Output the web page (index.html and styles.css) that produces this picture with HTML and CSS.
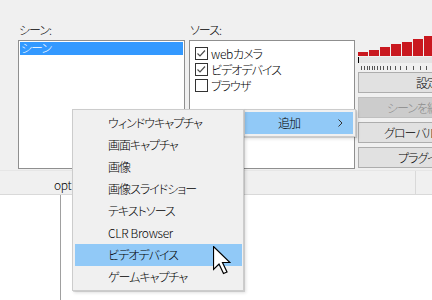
FILE: index.html
```html
<!DOCTYPE html>
<html lang="ja">
<head>
    <meta charset="UTF-8">
    <title>Open Broadcaster Software</title>
    <link rel="stylesheet" href="styles.css">
</head>
<body>
    <div class="window">
        <div class="top">
            <div class="pane pane-scenes">
                <div class="label">シーン:</div>
                <div class="listbox">
                    <div class="scene-item selected">シーン</div>
                </div>
            </div>

            <div class="pane pane-sources">
                <div class="label">ソース:</div>
                <div class="listbox sources">
                    <div class="check-item">
                        <span class="checkbox"><svg width="11" height="11" viewBox="0 0 11 11"><path d="M1.5 5.5 L4 8 L9 2.5" fill="none" stroke="#4d4d4d" stroke-width="1.2"/></svg></span>
                        <span><span class="latin">web</span>カメラ</span>
                    </div>
                    <div class="check-item">
                        <span class="checkbox"><svg width="11" height="11" viewBox="0 0 11 11"><path d="M1.5 5.5 L4 8 L9 2.5" fill="none" stroke="#4d4d4d" stroke-width="1.2"/></svg></span>
                        ビデオデバイス
                    </div>
                    <div class="check-item">
                        <span class="checkbox"></span>
                        ブラウザ
                    </div>
                </div>
            </div>

            <div class="controls">
                <div class="meter">
                    <span class="bar" style="height: 4px"></span>
                    <span class="bar" style="height: 6px"></span>
                    <span class="bar" style="height: 9px"></span>
                    <span class="bar" style="height: 12px"></span>
                    <span class="bar" style="height: 14px"></span>
                    <span class="bar" style="height: 17px"></span>
                    <span class="bar" style="height: 20px"></span>
                </div>
                <div class="slider"><span class="thumb"></span></div>
                <svg class="ticks" width="74" height="4" viewBox="0 0 74 4">
                    <g stroke="#555" stroke-width="1">
                        <line x1="3.5" y1="0" x2="3.5" y2="4"/>
                        <line x1="6.5" y1="0" x2="6.5" y2="4"/>
                        <line x1="9.5" y1="0" x2="9.5" y2="4"/>
                        <line x1="11.5" y1="0" x2="11.5" y2="4"/>
                        <line x1="14.5" y1="0" x2="14.5" y2="4"/>
                        <line x1="16.5" y1="0" x2="16.5" y2="4"/>
                        <line x1="19.5" y1="0" x2="19.5" y2="4"/>
                        <line x1="22.5" y1="0" x2="22.5" y2="4"/>
                        <line x1="25.5" y1="0" x2="25.5" y2="4"/>
                        <line x1="29.5" y1="0" x2="29.5" y2="4"/>
                        <line x1="32.5" y1="0" x2="32.5" y2="4"/>
                        <line x1="37.5" y1="0" x2="37.5" y2="4"/>
                        <line x1="42.5" y1="0" x2="42.5" y2="4"/>
                        <line x1="48.5" y1="0" x2="48.5" y2="4"/>
                        <line x1="55.5" y1="0" x2="55.5" y2="4"/>
                        <line x1="62.5" y1="0" x2="62.5" y2="4"/>
                        <line x1="68.5" y1="0" x2="68.5" y2="4"/>
                    </g>
                </svg>
                <div class="buttons">
                    <div class="button button-settings">設定...</div>
                    <div class="button button-edit disabled">シーンを編集</div>
                    <div class="button button-global">グローバルソース...</div>
                    <div class="button button-plugins">プラグイン...</div>
                </div>
            </div>
        </div>

        <div class="header-bar">
            <div class="header-cell latin">opt</div>
        </div>

        <div class="preview">
            <div class="preview-left"></div>
        </div>

        <!-- context menu: parent "追加" with its submenu opened to the left -->
        <div class="menu menu-parent">
            <div class="menu-item active">
                <span>追加</span>
                <svg width="5" height="8" viewBox="0 0 5 8"><path d="M0.5 0.5 L4 4 L0.5 7.5" fill="none" stroke="#333" stroke-width="1"/></svg>
            </div>
        </div>

        <div class="menu menu-sub">
            <div class="menu-item">ウィンドウキャプチャ</div>
            <div class="menu-item">画面キャプチャ</div>
            <div class="menu-item">画像</div>
            <div class="menu-item">画像スライドショー</div>
            <div class="menu-item">テキストソース</div>
            <div class="menu-item latin">CLR Browser</div>
            <div class="menu-item active">ビデオデバイス</div>
            <div class="menu-item">ゲームキャプチャ</div>
        </div>

        <svg class="cursor" width="18" height="29" viewBox="0 0 18 29">
            <path d="M0.5 0.5 L0.5 23.5 L6 18 L10.5 27.5 L14 26 L9.5 16.5 L17 16.5 Z" fill="#fff" stroke="#000" stroke-width="1.2" stroke-linejoin="miter"/>
        </svg>
    </div>
</body>
</html>
```

FILE: styles.css
```css
body {
    margin: 0;
    background-color: #f0f0f0;
    font-family: "Noto Sans CJK JP", sans-serif;
    font-size: 12px;
    font-weight: 300;
    font-feature-settings: "palt";
    letter-spacing: -1px;
    color: #000;
}

.latin {
    letter-spacing: -0.3px;
}

.window {
    position: relative;
    width: 432px;
    height: 300px;
    overflow: hidden;
}

.top {
    display: flex;
    height: 170px;
    padding: 22px 0 0 18px;
    box-sizing: border-box;
}

.pane-scenes {
    width: 167px;
    margin-right: 4px;
}

.pane-sources {
    width: 166px;
    margin-right: 3px;
}

.label {
    height: 18px;
    line-height: 16px;
    padding-left: 1px;
}

.listbox {
    height: 129px;
    box-sizing: border-box;
    border: 1px solid #8f8f8f;
    background-color: white;
}

.scene-item {
    margin: 1px;
    height: 13px;
    line-height: 12px;
    padding-left: 1px;
}

.scene-item.selected {
    background-color: #3399ff;
    color: white;
}

.sources {
    padding: 4px 0 0 5px;
}

.check-item {
    display: flex;
    align-items: center;
    height: 16px;
    gap: 3px;
}

.checkbox {
    display: flex;
    align-items: center;
    justify-content: center;
    width: 13px;
    height: 13px;
    box-sizing: border-box;
    border: 1px solid #333;
    background-color: white;
}

.controls {
    width: 74px;
    flex-shrink: 0;
}

.meter {
    display: flex;
    align-items: flex-end;
    gap: 1px;
    height: 20px;
    margin-top: 14px;
}

.bar {
    width: 10px;
    flex-shrink: 0;
    background-color: #c9181f;
}

.slider {
    height: 6px;
    margin-top: 1px;
    background-color: #e4e4e4;
}

.thumb {
    display: block;
    width: 1px;
    height: 6px;
    background-color: #000;
}

.ticks {
    display: block;
    margin-top: 3px;
}

.buttons {
    margin-top: 2px;
}

.button {
    width: 110px;
    height: 21px;
    box-sizing: border-box;
    margin-bottom: 4px;
    border: 1px solid #adadad;
    background-color: #e1e1e1;
    line-height: 19px;
    white-space: nowrap;
}

.button.disabled {
    border-color: #bfbfbf;
    background-color: #cccccc;
    color: #8a8a8a;
}

.button-settings { padding-left: 57px; }
.button-edit { padding-left: 28px; }
.button-global { padding-left: 25px; }
.button-plugins { padding-left: 39px; }

.header-bar {
    display: flex;
    height: 25px;
    box-sizing: border-box;
    border-top: 1px solid #e6e6e6;
    border-bottom: 1px solid #d9d9d9;
}

.header-cell {
    width: 416px;
    box-sizing: border-box;
    border-right: 1px solid #d9d9d9;
    padding: 6px 0 0 54px;
    line-height: 16px;
}

.preview {
    height: 105px;
    background-color: white;
}

.preview-left {
    width: 60px;
    height: 100%;
    border-right: 1px solid #a0a0a0;
}

.menu {
    position: absolute;
    top: 109px;
    box-sizing: border-box;
    border: 1px solid #cccccc;
    background-color: #f0f0f0;
    padding: 2px;
    box-shadow: 1px 1px 0 rgba(0, 0, 0, 0.12), 2px 2px 3px rgba(0, 0, 0, 0.12);
}

.menu-parent {
    left: 242px;
    width: 114px;
}

.menu-sub {
    left: 72px;
    width: 172px;
    padding: 2px 1px 2px 2px;
}

.menu-item {
    height: 22px;
    line-height: 22px;
    padding-left: 33px;
    white-space: nowrap;
}

.menu-parent .menu-item {
    display: flex;
    align-items: center;
    justify-content: space-between;
    padding-right: 10px;
}

.menu-item.active {
    background-color: #91c9f7;
}

.cursor {
    position: absolute;
    left: 213px;
    top: 246px;
}
```
